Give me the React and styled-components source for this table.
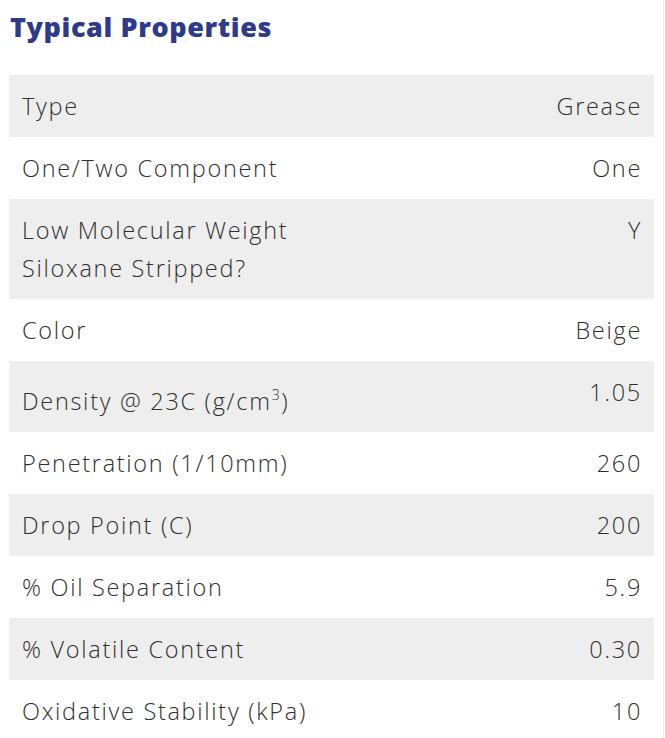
import React from "react";
import styled, { createGlobalStyle } from "styled-components";

const Global = createGlobalStyle`
  html, body { margin: 0; padding: 0; background: #fff; }
  body { font-family: "Open Sans", "Noto Sans", sans-serif; }
`;

const Page = styled.div`
  width: 664px;
  min-height: 738px;
  box-sizing: border-box;
  border-right: 1px solid #ececec;
  padding: 8px 10px 0 9px;
`;

const Title = styled.h2`
  margin: 0 0 29px 1px;
  font-family: "Open Sans", sans-serif;
  font-weight: 800;
  font-size: 27px;
  line-height: 38px;
  color: #2e3a8c;
  letter-spacing: 0.6px;
`;

const Table = styled.table`
  width: 645px;
  border-collapse: collapse;
  font-size: 23.5px;
  font-weight: 300;
  letter-spacing: 1.7px;
  line-height: 38px;
  color: #2f2f2f;
`;

const Row = styled.tr`
  background: ${(p) => (p.$shade ? "#eeeeee" : "transparent")};
`;

const Cell = styled.td`
  padding: 12px 12px 12px 13px;
  vertical-align: top;
  text-align: ${(p) => (p.$right ? "right" : "left")};
  width: ${(p) => (p.$right ? "auto" : "360px")};
`;

const Sup = styled.sup`
  font-size: 14px;
  vertical-align: 10px;
  line-height: 44px;
`;

const rows = [
  ["Type", "Grease"],
  ["One/Two Component", "One"],
  [<>Low Molecular Weight<br />Siloxane Stripped?</>, "Y"],
  ["Color", "Beige"],
  [<>Density @ 23C (g/cm<Sup>3</Sup>)</>, "1.05"],
  ["Penetration (1/10mm)", "260"],
  ["Drop Point (C)", "200"],
  ["% Oil Separation", "5.9"],
  ["% Volatile Content", "0.30"],
  ["Oxidative Stability (kPa)", "10"],
];

export default function App() {
  return (
    <Page>
      <Global />
      <Title>Typical Properties</Title>
      <Table>
        <tbody>
          {rows.map(([k, v], i) => (
            <Row key={i} $shade={i % 2 === 0}>
              <Cell>{k}</Cell>
              <Cell $right>{v}</Cell>
            </Row>
          ))}
        </tbody>
      </Table>
    </Page>
  );
}
